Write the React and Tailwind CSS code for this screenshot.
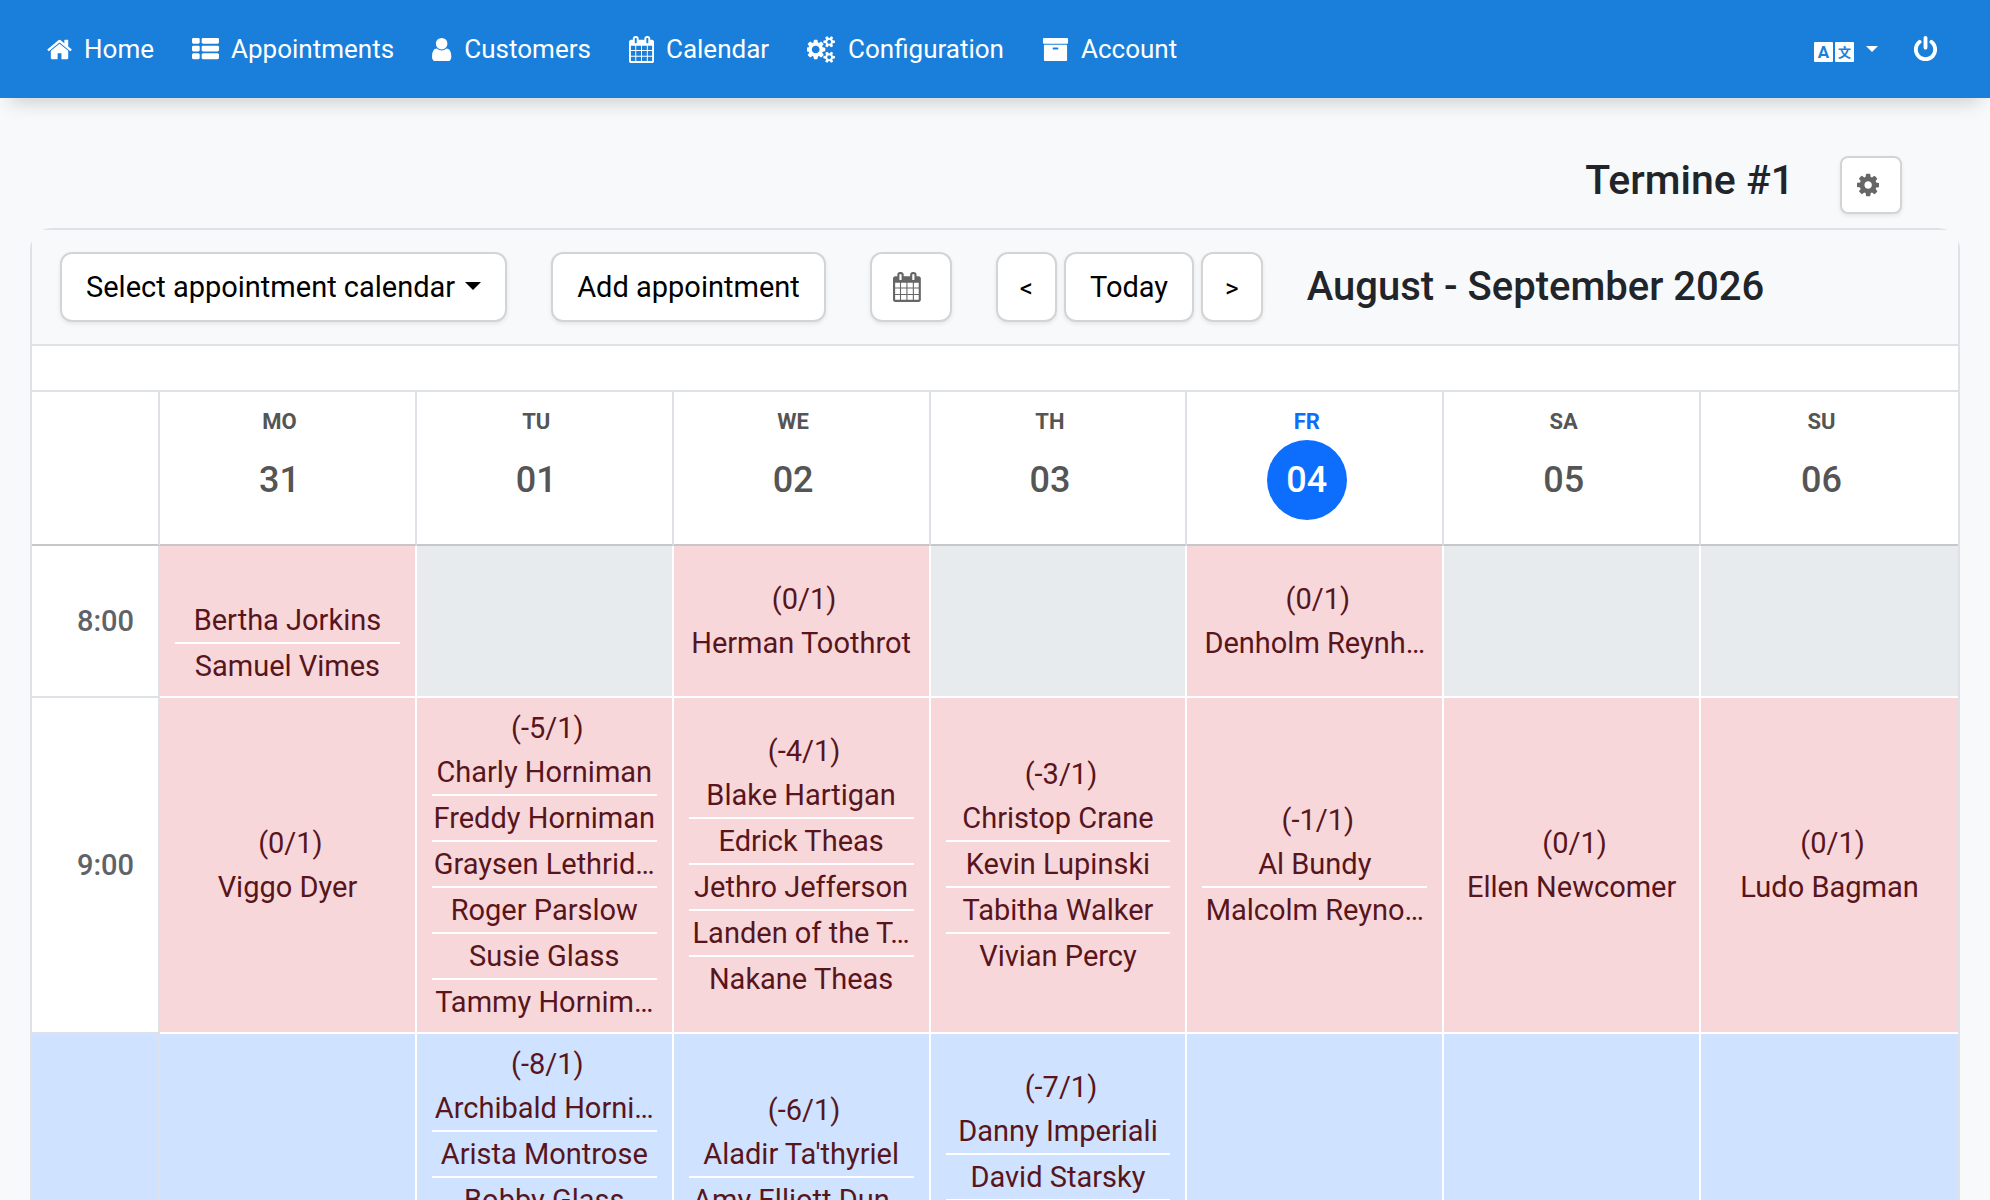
import React from "react";

const icons = {
    home: {
        viewBox: "64 0 1664 1792",
        d: "M1472 992v480q0 26-19 45t-45 19h-384v-384h-256v384h-384q-26 0-45-19t-19-45v-480q0-1 .5-3t.5-3l575-474 575 474q1 2 1 6zm223-69l-62 74q-8 9-21 11h-3q-13 0-21-7l-692-577-692 577q-12 8-24 7-13-2-21-11l-62-74q-8-10-7-23.5t11-21.5l719-599q32-26 76-26t76 26l244 204v-195q0-14 9-23t23-9h192q14 0 23 9t9 23v408l219 182q10 8 11 21.5t-7 23.5z",
    },
    list: {
        viewBox: "0 0 1792 1792",
        d: "M512 1248v192q0 40-28 68t-68 28h-320q-40 0-68-28t-28-68v-192q0-40 28-68t68-28h320q40 0 68 28t28 68zm0-512v192q0 40-28 68t-68 28h-320q-40 0-68-28t-28-68v-192q0-40 28-68t68-28h320q40 0 68 28t28 68zm1280 512v192q0 40-28 68t-68 28h-960q-40 0-68-28t-28-68v-192q0-40 28-68t68-28h960q40 0 68 28t28 68zm-1280-1024v192q0 40-28 68t-68 28h-320q-40 0-68-28t-28-68v-192q0-40 28-68t68-28h320q40 0 68 28t28 68zm1280 512v192q0 40-28 68t-68 28h-960q-40 0-68-28t-28-68v-192q0-40 28-68t68-28h960q40 0 68 28t28 68zm0-512v192q0 40-28 68t-68 28h-960q-40 0-68-28t-28-68v-192q0-40 28-68t68-28h960q40 0 68 28t28 68z",
    },
    user: {
        viewBox: "256 0 1344 1792",
        d: "M1536 1399q0 109-62.5 187t-150.5 78h-854q-88 0-150.5-78t-62.5-187q0-85 8.5-160.5t31.5-152 58.5-131 94-89 134.5-34.5q131 128 313 128t313-128q76 0 134.5 34.5t94 89 58.5 131 31.5 152 8.5 160.5zm-256-887q0 159-112.5 271.5t-271.5 112.5-271.5-112.5-112.5-271.5 112.5-271.5 271.5-112.5 271.5 112.5 112.5 271.5z",
    },
    calendar: {
        viewBox: "64 0 1664 1792",
        d: "M192 1664h288v-288h-288v288zm352 0h320v-288h-320v288zm-352-352h288v-320h-288v320zm352 0h320v-320h-320v320zm-352-384h288v-288h-288v288zm736 736h320v-288h-320v288zm-384-736h320v-288h-320v288zm768 736h288v-288h-288v288zm-384-352h320v-320h-320v320zm-352-864v-288q0-13-9.5-22.5t-22.5-9.5h-64q-13 0-22.5 9.5t-9.5 22.5v288q0 13 9.5 22.5t22.5 9.5h64q13 0 22.5-9.5t9.5-22.5zm736 864h288v-320h-288v320zm-384-384h320v-288h-320v288zm384 0h288v-288h-288v288zm32-480v-288q0-13-9.5-22.5t-22.5-9.5h-64q-13 0-22.5 9.5t-9.5 22.5v288q0 13 9.5 22.5t22.5 9.5h64q13 0 22.5-9.5t9.5-22.5zm384-64v1280q0 52-38 90t-90 38h-1408q-52 0-90-38t-38-90v-1280q0-52 38-90t90-38h128v-96q0-66 47-113t113-47h64q66 0 113 47t47 113v96h384v-96q0-66 47-113t113-47h64q66 0 113 47t47 113v96h128q52 0 90 38t38 90z",
    },
    cogs: {
        viewBox: "0 0 1920 1792",
        d: "M832 896q0-106-75-181t-181-75-181 75-75 181 75 181 181 75 181-75 75-181zm768 512q0-52-38-90t-90-38-90 38-38 90q0 53 37.5 90.5t90.5 37.5 90.5-37.5 37.5-90.5zm0-1024q0-52-38-90t-90-38-90 38-38 90q0 53 37.5 90.5t90.5 37.5 90.5-37.5 37.5-90.5zm-384 421v185q0 10-7 19.5t-16 10.5l-155 24q-11 35-32 76 34 48 90 115 7 11 7 20 0 12-7 19-23 30-82.5 89.5t-78.5 59.5q-11 0-21-7l-115-90q-37 19-77 31-11 108-23 155-7 24-30 24h-186q-11 0-20-7.5t-10-17.5l-23-153q-34-10-75-31l-118 89q-7 7-20 7-11 0-21-8-144-133-144-160 0-9 7-19 10-14 41-53t47-61q-23-44-35-82l-152-24q-10-1-17-9.5t-7-19.5v-185q0-10 7-19.5t16-10.5l155-24q11-35 32-76-34-48-90-115-7-11-7-20 0-12 7-20 22-30 82-89t79-59q11 0 21 7l115 90q34-18 77-32 11-108 23-154 7-24 30-24h186q11 0 20 7.5t10 17.5l23 153q34 10 75 31l118-89q8-7 20-7 11 0 21 8 144 133 144 160 0 8-7 19-12 16-42 54t-45 60q23 48 34 82l152 23q10 2 17 10.5t7 19.5zm640 533v140q0 16-149 31-12 27-30 52 51 113 51 138 0 4-4 7-122 71-124 71-8 0-46-47t-52-68q-20 2-30 2t-30-2q-14 21-52 68t-46 47q-2 0-124-71-4-3-4-7 0-25 51-138-18-25-30-52-149-15-149-31v-140q0-16 149-31 13-29 30-52-51-113-51-138 0-4 4-7 4-2 35-20t59-34 30-16q8 0 46 46.5t52 67.5q20-2 30-2t30 2q51-71 92-112l6-2q4 0 124 70 4 3 4 7 0 25-51 138 17 23 30 52 149 15 149 31zm0-1024v140q0 16-149 31-12 27-30 52 51 113 51 138 0 4-4 7-122 71-124 71-8 0-46-47t-52-68q-20 2-30 2t-30-2q-14 21-52 68t-46 47q-2 0-124-71-4-3-4-7 0-25 51-138-18-25-30-52-149-15-149-31v-140q0-16 149-31 13-29 30-52-51-113-51-138 0-4 4-7 4-2 35-20t59-34 30-16q8 0 46 46.5t52 67.5q20-2 30-2t30 2q51-71 92-112l6-2q4 0 124 70 4 3 4 7 0 25-51 138 17 23 30 52 149 15 149 31z",
    },
    archive: {
        viewBox: "0 0 1792 1792",
        d: "M1088 832q0-26-19-45t-45-19h-256q-26 0-45 19t-19 45 19 45 45 19h256q26 0 45-19t19-45zm576-192v960q0 26-19 45t-45 19h-1408q-26 0-45-19t-19-45v-960q0-26 19-45t45-19h1408q26 0 45 19t19 45zm64-448v256q0 26-19 45t-45 19h-1536q-26 0-45-19t-19-45v-256q0-26 19-45t45-19h1536q26 0 45 19t19 45z",
    },
    power: {
        viewBox: "0 0 1792 1792",
        d: "M1664 896q0 156-61 298t-164 245-245 164-298 61-298-61-245-164-164-245-61-298q0-182 80.5-343t226.5-270q43-32 95.5-25t83.5 50q32 42 24.5 94.5t-49.5 84.5q-98 74-151.5 181t-53.5 228q0 104 40.5 198.5t109.5 163.5 163.5 109.5 198.5 40.5 198.5-40.5 163.5-109.5 109.5-163.5 40.5-198.5q0-121-53.5-228t-151.5-181q-42-32-49.5-84.5t24.5-94.5q31-43 84-50t95 25q146 109 226.5 270t80.5 343zm-640-768v640q0 52-38 90t-90 38-90-38-38-90v-640q0-52 38-90t90-38 90 38 38 90z",
    },
    cog: {
        viewBox: "128 0 1536 1792",
        d: "M1152 896q0-106-75-181t-181-75-181 75-75 181 75 181 181 75 181-75 75-181zm512-109v222q0 12-8 23t-20 13l-185 28q-19 54-39 91 35 50 107 138 10 12 10 25t-9 23q-27 37-99 108t-94 71q-12 0-26-9l-138-108q-44 23-91 38-16 136-29 186-7 28-36 28h-222q-14 0-24.5-8.5t-11.5-21.5l-28-184q-49-16-90-37l-141 107q-10 9-25 9-14 0-25-11-126-114-165-168-7-10-7-23 0-12 8-23 15-21 51-66.5t54-70.5q-27-50-41-99l-183-27q-13-2-21-12.5t-8-23.5v-222q0-12 8-23t19-13l186-28q14-46 39-92-40-57-107-138-10-12-10-24 0-10 9-23 26-36 98.5-107.5t94.5-71.5q13 0 26 10l138 107q44-23 91-38 16-136 29-186 7-28 36-28h222q14 0 24.5 8.5t11.5 21.5l28 184q49 16 90 37l142-107q9-9 24-9 13 0 25 10 129 119 165 170 7 8 7 22 0 12-8 23-15 21-51 66.5t-54 70.5q26 50 41 98l183 28q13 2 21 12.5t8 23.5z",
    },
};

const navItems = [
    { label: "Home", icon: "home" },
    { label: "Appointments", icon: "list" },
    { label: "Customers", icon: "user" },
    { label: "Calendar", icon: "calendar" },
    { label: "Configuration", icon: "cogs" },
    { label: "Account", icon: "archive" },
];

const days = [
    { name: "MO", date: "31" },
    { name: "TU", date: "01" },
    { name: "WE", date: "02" },
    { name: "TH", date: "03" },
    { name: "FR", date: "04", today: true },
    { name: "SA", date: "05" },
    { name: "SU", date: "06" },
];

// free = remaining places, so a slot holds 1 - free bookings
const rows = [
    {
        time: "8:00",
        slots: [
            { names: ["Bertha Jorkins", "Samuel Vimes"] },
            null,
            { free: 0, names: ["Herman Toothrot"] },
            null,
            { free: 0, names: ["Denholm Reynh…"] },
            null,
            null,
        ],
    },
    {
        time: "9:00",
        slots: [
            { free: 0, names: ["Viggo Dyer"] },
            { free: -5, names: ["Charly Horniman", "Freddy Horniman", "Graysen Lethrid…", "Roger Parslow", "Susie Glass", "Tammy Hornim…"] },
            { free: -4, names: ["Blake Hartigan", "Edrick Theas", "Jethro Jefferson", "Landen of the T…", "Nakane Theas"] },
            { free: -3, names: ["Christop Crane", "Kevin Lupinski", "Tabitha Walker", "Vivian Percy"] },
            { free: -1, names: ["Al Bundy", "Malcolm Reyno…"] },
            { free: 0, names: ["Ellen Newcomer"] },
            { free: 0, names: ["Ludo Bagman"] },
        ],
    },
    {
        time: "10:00",
        selected: true,
        slots: [
            null,
            { free: -8, names: ["Archibald Horni…", "Arista Montrose", "Bobby Glass"] },
            { free: -6, names: ["Aladir Ta'thyriel", "Amy Elliott Dun…"] },
            { free: -7, names: ["Danny Imperiali", "David Starsky"] },
            null,
            null,
            null,
        ],
    },
];

function Icon({ name, className }) {
    return (
        <svg viewBox={icons[name].viewBox} className={className} fill="currentColor" aria-hidden="true">
            <path d={icons[name].d} />
        </svg>
    );
}

function Button({ children, className, ...props }) {
    return (
        <button
            type="button"
            className={`flex items-center justify-center border-2 border-[#d3d4d5] bg-white text-black shadow-[0_2px_4px_rgba(0,0,0,0.08)] ${className}`}
            {...props}
        >
            {children}
        </button>
    );
}

function Navbar() {
    return (
        <nav className="relative flex h-[98px] items-center justify-between bg-[#1a7fda] pl-[47px] pr-[51px] text-white shadow-[0_14px_18px_-10px_rgba(0,0,0,0.18)]">
            <ul className="flex items-center gap-[38px]">
                {navItems.map((item) => (
                    <li key={item.label}>
                        <a href="#" className="flex items-center gap-3 text-[26px] leading-[40px]">
                            <Icon name={item.icon} className="h-[27px] w-auto" />
                            {item.label}
                        </a>
                    </li>
                ))}
            </ul>
            <div className="flex items-center gap-[34px]">
                <button type="button" className="flex items-center gap-3" aria-label="Language">
                    <span className="flex gap-[2px] pt-[6px] text-center text-[#1a7fda]">
                        <span className="h-5 w-[19px] rounded-[1px] bg-white text-[17px] font-bold leading-5">A</span>
                        <span className="h-5 w-[19px] rounded-[1px] bg-white font-['Noto_Sans_CJK_SC',sans-serif] text-[13px] font-bold leading-5">文</span>
                    </span>
                    <span className="border-x-[6px] border-t-[6px] border-x-transparent border-t-white"></span>
                </button>
                <a href="#" aria-label="Log out">
                    <Icon name="power" className="h-[27px] w-auto" />
                </a>
            </div>
        </nav>
    );
}

function Slot({ slot, selected }) {
    if (!slot) {
        return <td className={`border-b-2 border-r-2 border-white last:border-r-0 ${selected ? "bg-[#cfe2ff]" : "bg-[#e7ebee]"}`}></td>;
    }
    const booked = slot.free === undefined ? slot.names.length : 1 - slot.free;

    return (
        <td className={`border-b-2 border-r-2 border-white px-[15px] py-2 text-center align-middle text-[#58151c] last:border-r-0 ${selected ? "bg-[#cfe2ff]" : "bg-[#f8d7da]"}`}>
            <p className="h-11 pl-1.5">{slot.free !== undefined && `(${slot.free}/1)`}</p>
            <ul className="divide-y-2 divide-white">
                {Array.from({ length: booked }, (_, i) => (
                    <li key={i} className="box-content h-11 whitespace-nowrap">{slot.names[i]}</li>
                ))}
            </ul>
        </td>
    );
}

function WeekTable() {
    return (
        <table className="w-full table-fixed border-separate border-spacing-0 border-t-2 border-[#dee2e6] text-[29px] leading-[44px]">
            <thead>
                <tr>
                    <th className="w-32 border-b-2 border-r-2 border-b-[#c6c7c8] border-r-[#dee2e6]"></th>
                    {days.map((day) => (
                        <th key={day.name} className="border-b-2 border-r-2 border-b-[#c6c7c8] border-r-[#dee2e6] pb-6 pr-4 pt-3 last:border-r-0">
                            <span className={`block text-[22px] font-bold leading-9 ${day.today ? "text-[#0d6efd]" : "text-[#555]"}`}>{day.name}</span>
                            <span className={`mx-auto flex size-20 items-center justify-center rounded-full text-[36px] font-medium ${day.today ? "bg-[#0d6efd] text-white" : "text-[#555]"}`}>{day.date}</span>
                        </th>
                    ))}
                </tr>
            </thead>
            <tbody>
                {rows.map((row) => (
                    <tr key={row.time}>
                        <th className={`border-b-2 border-r-2 border-[#dee2e6] pr-6 text-right font-medium text-[#5f6368] ${row.selected ? "bg-[#cfe2ff]" : "bg-white"}`}>{row.time}</th>
                        {row.slots.map((slot, i) => (
                            <Slot key={i} slot={slot} selected={row.selected} />
                        ))}
                    </tr>
                ))}
            </tbody>
        </table>
    );
}

function App() {
    return (
        <div className="min-h-screen bg-[#f8f9fb] font-[Roboto,sans-serif] text-[#212529]">
            <Navbar />
            <header className="flex justify-end gap-[46px] pb-[14px] pr-[88px] pt-[58px]">
                <h1 className="text-[41px] font-medium leading-[48px]">Termine #1</h1>
                <Button className="h-[58px] w-[62px] rounded-lg pr-1.5 text-[#666]" aria-label="Settings">
                    <Icon name="cog" className="h-[26px] w-auto text-[#666]" />
                </Button>
            </header>
            <main className="mx-[30px] rounded-t-[22px] border-2 border-[#dee2e6]">
                <div className="flex items-center border-b-2 border-[#dee2e6] bg-[#f8f9fb] px-7 py-[22px] text-[29px]">
                    <Button className="mr-11 h-[70px] gap-[10px] rounded-xl px-6 pt-[2px]">
                        Select appointment calendar
                        <span className="mb-1 border-x-8 border-t-8 border-x-transparent border-t-black"></span>
                    </Button>
                    <Button className="mr-11 h-[70px] rounded-xl px-6 pt-[2px]">Add appointment</Button>
                    <Button className="mr-11 h-[70px] w-[82px] rounded-xl pr-2" aria-label="Choose date">
                        <Icon name="calendar" className="h-[30px] w-auto text-[#666]" />
                    </Button>
                    <div className="mr-11 flex gap-[7px]">
                        <Button className="h-[70px] rounded-xl px-[22px] pt-[2px] text-[26px]">&lt;</Button>
                        <Button className="h-[70px] rounded-xl px-6 pt-[2px]">Today</Button>
                        <Button className="h-[70px] rounded-xl px-[22px] pt-[2px] text-[26px]">&gt;</Button>
                    </div>
                    <h2 className="text-[40px] font-medium leading-[48px]">August - September 2026</h2>
                </div>
                <div className="bg-white pt-11">
                    <WeekTable />
                </div>
            </main>
        </div>
    );
}

export default App;
